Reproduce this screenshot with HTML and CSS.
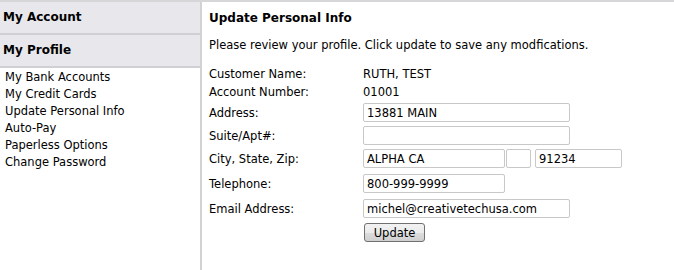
FILE: index.html
```html
<!DOCTYPE html>
<html>
<head>
<meta charset="utf-8">
<link rel="stylesheet" href="styles.css">
</head>
<body>
<div class="page">
  <aside class="sidebar">
    <div class="side-head">My Account</div>
    <div class="side-head">My Profile</div>
    <ul class="side-links">
      <li><a href="#">My Bank Accounts</a></li>
      <li><a href="#">My Credit Cards</a></li>
      <li><a href="#">Update Personal Info</a></li>
      <li><a href="#">Auto-Pay</a></li>
      <li><a href="#">Paperless Options</a></li>
      <li><a href="#">Change Password</a></li>
    </ul>
  </aside>
  <main class="main">
    <h1 class="title">Update Personal Info</h1>
    <p class="intro">Please review your profile. Click update to save any modfications.</p>
    <div class="info">
      <div class="info-row"><span class="label">Customer Name:</span><span>RUTH, TEST</span></div>
      <div class="info-row"><span class="label">Account Number:</span><span>01001</span></div>
    </div>
    <form class="form">
      <div class="row"><label class="label">Address:</label><input class="inp w-long" type="text" value="13881 MAIN"></div>
      <div class="row"><label class="label">Suite/Apt#:</label><input class="inp w-long" type="text" value=""></div>
      <div class="row gap6"><label class="label">City, State, Zip:</label>
        <div class="csz">
          <input class="inp w-city" type="text" value="ALPHA CA">
          <input class="inp w-state" type="text" value="">
          <input class="inp w-zip" type="text" value="91234">
        </div>
      </div>
      <div class="row gap6"><label class="label">Telephone:</label><input class="inp w-mid" type="text" value="800-999-9999"></div>
      <div class="row gap5"><label class="label">Email Address:</label><input class="inp w-long" type="text" value="michel@creativetechusa.com"></div>
      <div class="row"><span class="label"></span><button type="button" class="btn">Update</button></div>
    </form>
  </main>
</div>
</body>
</html>
```

FILE: styles.css
```css
html, body {
  margin: 0;
  padding: 0;
  background: #fff;
}
body {
  font-family: "DejaVu Sans", Verdana, sans-serif;
  font-size: 11.5px;
  color: #000;
}
.page {
  display: flex;
  min-height: 270px;
  border-top: 2px solid #d6d6d8;
  box-sizing: border-box;
}
.sidebar {
  width: 200px;
  border-right: 2px solid #d2d2d2;
  flex: none;
}
.side-head {
  background: #e8e8ec;
  font-weight: bold;
  font-size: 12px;
  height: 31px;
  line-height: 31px;
  padding-left: 3px;
  border-bottom: 2px solid #d0d0d4;
}
.side-links {
  list-style: none;
  margin: 0;
  padding: 1px 0 0 5px;
}
.side-links li {
  line-height: 17px;
  height: 17px;
}
.side-links a {
  color: #000;
  text-decoration: none;
}
.main {
  flex: 1;
  padding-left: 7px;
}
.title {
  font-size: 12px;
  font-weight: bold;
  margin: 0;
  height: 31px;
  line-height: 33px;
}
.intro {
  margin: 0;
  line-height: 24px;
  height: 24px;
}
.info {
  margin-top: 8px;
}
.info-row {
  display: flex;
  height: 18px;
  line-height: 18px;
}
.label {
  width: 154px;
  flex: none;
}
.form {
  margin: 2px 0 0 0;
}
.row {
  display: flex;
  align-items: center;
  height: 19px;
  margin-bottom: 4px;
}
.row.gap6 { margin-bottom: 6px; }
.row.gap5 { margin-bottom: 5px; }
.csz {
  display: flex;
  gap: 1px;
}
.inp {
  box-sizing: border-box;
  height: 19px;
  border: 1px solid #c8c8c8;
  border-radius: 2px;
  font-family: "DejaVu Sans", Verdana, sans-serif;
  font-size: 11.5px;
  padding: 0 3px;
  margin: 0;
  color: #000;
  background: #fff;
}
.w-long { width: 207px; }
.w-mid { width: 142px; }
.w-city { width: 142px; }
.w-state { width: 25px; }
.w-zip { width: 87px; margin-left: 3px; }
.btn {
  box-sizing: border-box;
  height: 19px;
  width: 61px;
  margin-left: 1px;
  padding: 0;
  font-family: "DejaVu Sans", Verdana, sans-serif;
  font-size: 11.5px;
  color: #000;
  border: 1px solid #707070;
  border-radius: 3px;
  background: linear-gradient(#f2f2f2, #ebebeb 50%, #dddddd 50%, #cfcfcf);
}
```
